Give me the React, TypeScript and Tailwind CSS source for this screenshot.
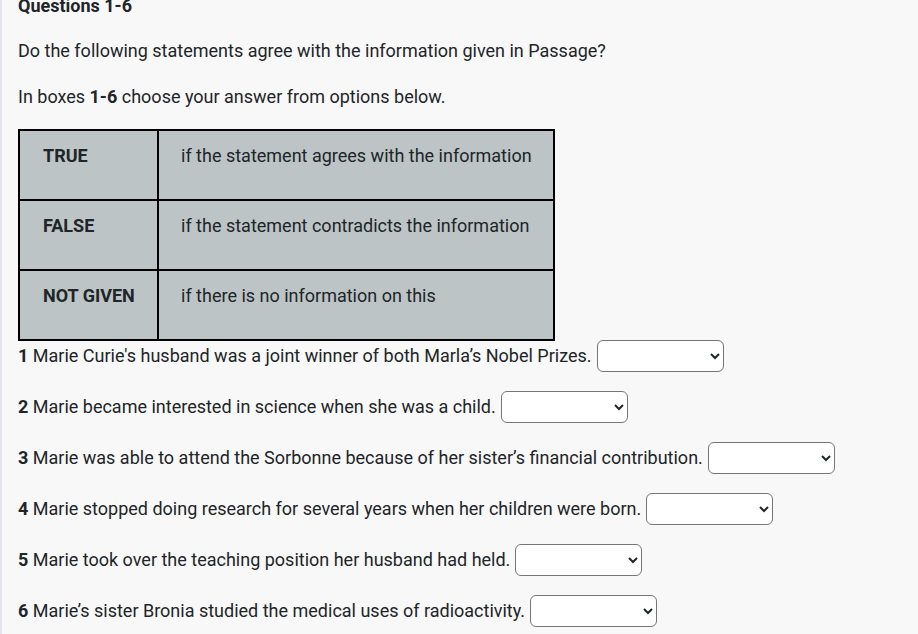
const rows = [
  { label: "TRUE", text: "if the statement agrees with the information" },
  { label: "FALSE", text: "if the statement contradicts the information" },
  { label: "NOT GIVEN", text: "if there is no information on this" },
];

const questions = [
  "Marie Curie's husband was a joint winner of both Marla\u2019s Nobel Prizes.",
  "Marie became interested in science when she was a child.",
  "Marie was able to attend the Sorbonne because of her sister\u2019s financial contribution.",
  "Marie stopped doing research for several years when her children were born.",
  "Marie took over the teaching position her husband had held.",
  "Marie\u2019s sister Bronia studied the medical uses of radioactivity.",
];

function AnswerSelect() {
  return (
    <select className="ml-[5px] h-[32px] w-[127px] rounded-[6px] border border-[#767676] bg-white text-[16px]" defaultValue="">
      <option value=""></option>
      <option value="TRUE">TRUE</option>
      <option value="FALSE">FALSE</option>
      <option value="NOT GIVEN">NOT GIVEN</option>
    </select>
  );
}

export default function App() {
  return (
    <div className="h-[634px] overflow-hidden border-l-2 border-[#e4e4ea] bg-[#f8f8f8] pl-[16px] font-['Roboto',sans-serif] text-[18px] text-[#212529]">
      <h3 className="mt-[-5px] font-bold leading-[22px]">Questions 1-6</h3>
      <p className="mt-[22px] leading-[24px]">Do the following statements agree with the information given in Passage?</p>
      <p className="mt-[22px] leading-[24px]">
        In boxes <b>1-6</b> choose your answer from options below.
      </p>
      <table className="mt-[20px] w-[537px] table-fixed border-collapse border-2 border-black bg-[#bcc4c5]">
        <tbody>
          {rows.map((r) => (
            <tr key={r.label} className="h-[70px]">
              <td className="w-[139px] whitespace-nowrap border-2 border-black pl-[23px] pr-0 pb-[27px] pt-[11px] align-top font-bold">{r.label}</td>
              <td className="whitespace-nowrap border-2 border-black pl-[22px] pr-0 pb-[27px] pt-[11px] align-top">{r.text}</td>
            </tr>
          ))}
        </tbody>
      </table>
      <div className="mt-[-1px] flex flex-col gap-[19px]">
        {questions.map((q, i) => (
          <div key={i} className="flex items-center whitespace-nowrap leading-[24px]">
            <span>
              <b>{i + 1}</b> {q}
            </span>
            <AnswerSelect />
          </div>
        ))}
      </div>
    </div>
  );
}
